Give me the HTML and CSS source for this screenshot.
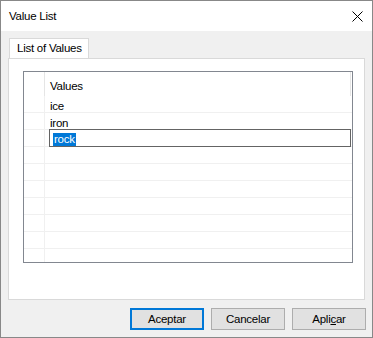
FILE: index.html
```html
<!DOCTYPE html>
<html lang="en">
<head>
    <meta charset="UTF-8">
    <title>Value List</title>
    <link rel="stylesheet" href="styles.css">
</head>
<body>
    <div class="window">
        <div class="titlebar">
            <span class="title">Value List</span>
            <svg class="close" width="11" height="11" viewBox="0 0 11 11">
                <path d="M0.5 0.5 L10.5 10.5 M10.5 0.5 L0.5 10.5" stroke="#000" stroke-width="1" fill="none"/>
            </svg>
        </div>
        <div class="client">
            <div class="tabs">
                <div class="tab">List of Values</div>
            </div>
            <div class="panel">
                <div class="grid">
                    <div class="row header">
                        <div class="rowhead"></div>
                        <div class="cell">Values</div>
                    </div>
                    <div class="row">
                        <div class="rowhead"></div>
                        <div class="cell">ice</div>
                    </div>
                    <div class="row">
                        <div class="rowhead"></div>
                        <div class="cell">iron</div>
                    </div>
                    <div class="row">
                        <div class="rowhead"></div>
                        <div class="cell"><div class="edit"><span class="sel">rock</span></div></div>
                    </div>
                    <div class="row"><div class="rowhead"></div><div class="cell"></div></div>
                    <div class="row"><div class="rowhead"></div><div class="cell"></div></div>
                    <div class="row"><div class="rowhead"></div><div class="cell"></div></div>
                    <div class="row"><div class="rowhead"></div><div class="cell"></div></div>
                    <div class="row"><div class="rowhead"></div><div class="cell"></div></div>
                    <div class="row"><div class="rowhead"></div><div class="cell"></div></div>
                    <div class="row"><div class="rowhead"></div><div class="cell"></div></div>
                </div>
            </div>
            <div class="buttons">
                <button class="btn default">Aceptar</button>
                <button class="btn">Cancelar</button>
                <button class="btn">Apli<u>c</u>ar</button>
            </div>
        </div>
    </div>
</body>
</html>
```

FILE: styles.css
```css
body {
    margin: 0;
    font-family: "Liberation Sans", Arial, sans-serif;
    font-size: 11.5px;
    letter-spacing: -0.25px;
    color: #000;
}
.window {
    width: 373px;
    height: 338px;
    box-sizing: border-box;
    border: 1px solid #888;
    background: #f0f0f0;
    display: flex;
    flex-direction: column;
}
.titlebar {
    height: 30px;
    background: #fff;
    display: flex;
    align-items: center;
    padding-left: 8px;
    padding-right: 9px;
}
.title {
    flex: 1;
}
.close {
    display: block;
}
.client {
    flex: 1;
    padding: 7px 7px 0 7px;
    display: flex;
    flex-direction: column;
}
.tabs {
    display: flex;
    height: 20px;
}
.tab {
    background: #fff;
    border: 1px solid #d9d9d9;
    border-bottom: none;
    padding: 0 6px 0 7px;
    line-height: 19px;
    margin-left: 1px;
}
.panel {
    height: 242px;
    box-sizing: border-box;
    background: #fff;
    border: 1px solid #d9d9d9;
    padding: 12px 11px 0 14px;
}
.grid {
    height: 192px;
    box-sizing: border-box;
    border: 1px solid #828790;
    overflow: hidden;
}
.row {
    display: flex;
    height: 17px;
    box-sizing: border-box;
    border-bottom: 1px solid #f0f0f0;
}
.row.header {
    height: 24px;
    border-bottom: none;
}
.rowhead {
    width: 20px;
    border-right: 1px solid #f0f0f0;
}
.header .rowhead {
    border-right: 1px solid #e5e5e5;
}
.cell {
    flex: 1;
    padding: 3px 0 0 5px;
    line-height: 14px;
}
.header .cell {
    padding-top: 7px;
    border-right: 1px solid #e5e5e5;
    margin-right: 1px;
}
.edit {
    height: 18px;
    box-sizing: border-box;
    border: 1px solid #646464;
    margin: -4px 1px 0 -1px;
    padding: 2px 0 0 3px;
}
.sel {
    display: inline-block;
    background: #0078d7;
    color: #fff;
    line-height: 13px;
    padding: 0 1px;
}
.buttons {
    display: flex;
    justify-content: flex-end;
    gap: 7px;
    padding-top: 8px;
    margin-right: -1px;
}
.btn {
    width: 74px;
    height: 22px;
    box-sizing: border-box;
    background: #e1e1e1;
    border: 1px solid #adadad;
    font-family: inherit;
    font-size: 11.5px;
    letter-spacing: -0.25px;
    color: #000;
    padding: 0;
}
.btn.default {
    border: 2px solid #0078d7;
}
```
